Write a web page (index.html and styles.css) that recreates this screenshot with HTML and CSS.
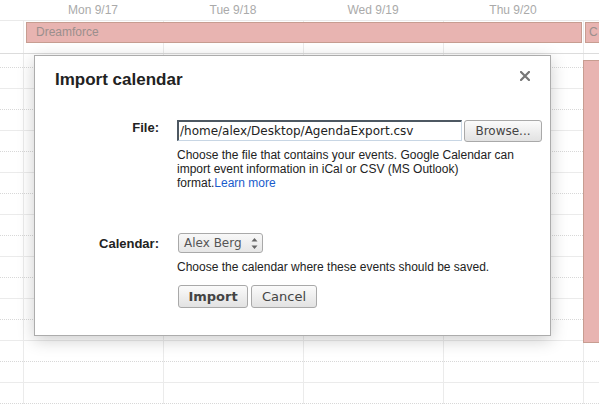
FILE: index.html
```html
<!DOCTYPE html>
<html>
<head>
<meta charset="utf-8">
<link rel="stylesheet" href="styles.css">
</head>
<body>
<div class="cal">
  <div class="head">
    <div class="gutter"></div>
    <div class="day">Mon 9/17</div>
    <div class="day">Tue 9/18</div>
    <div class="day">Wed 9/19</div>
    <div class="day">Thu 9/20</div>
    <div class="day"></div>
  </div>
  <div class="allday">
    <div class="acell c1"></div>
    <div class="acell c2"></div>
    <div class="acell c3"></div>
    <div class="acell c4"></div>
    <div class="acell c5"></div>
    <div class="acell c6"></div>
    <div class="chip chip-main">Dreamforce</div>
    <div class="chip chip-side">C</div>
  </div>
  <div class="grid">
    <div class="row first"></div>
    <div class="row solid"></div><div class="row dot"></div>
    <div class="row solid"></div><div class="row dot"></div>
    <div class="row solid"></div><div class="row dot"></div>
    <div class="row solid"></div><div class="row dot"></div>
    <div class="row solid"></div><div class="row dot"></div>
    <div class="row solid"></div><div class="row dot"></div>
    <div class="row solid"></div><div class="row dot"></div>
    <div class="row solid"></div><div class="row dot"></div>
    <div class="col c2"></div>
    <div class="col c3"></div>
    <div class="col c4"></div>
    <div class="col c5"></div>
    <div class="col c6"></div>
    <div class="event"></div>
  </div>
</div>

<div class="dialog">
  <div class="dlg-head">
    <div class="dlg-title">Import calendar</div>
    <svg class="close" width="10" height="10" viewBox="0 0 10 10"><path d="M1 1L9 9M9 1L1 9" stroke="#777" stroke-width="2.2" stroke-linecap="square"/></svg>
  </div>
  <div class="form">
    <div class="label">File:</div>
    <div class="field">
      <div class="file-row">
        <div class="input">/home/alex/Desktop/AgendaExport.csv</div>
        <div class="btn browse">Browse...</div>
      </div>
      <div class="help">Choose the file that contains your events. Google Calendar can import event information in iCal or CSV (MS Outlook) format.<a class="link">Learn more</a></div>
    </div>
    <div class="label label-cal">Calendar:</div>
    <div class="field">
      <div class="select"><span>Alex Berg</span>
        <svg class="arrows" width="7" height="13" viewBox="0 0 7 13"><path d="M3.5 1L6.5 4.5H0.5Z M3.5 12L0.5 8.5H6.5Z" fill="#666"/></svg>
      </div>
      <div class="help help-cal">Choose the calendar where these events should be saved.</div>
      <div class="actions">
        <div class="btn big import">Import</div>
        <div class="btn big cancel">Cancel</div>
      </div>
    </div>
  </div>
</div>
</body>
</html>
```

FILE: styles.css
```css
html, body {
  margin: 0;
  padding: 0;
  background: #fff;
  width: 599px;
  height: 405px;
  overflow: hidden;
  font-family: "Liberation Sans", Arial, sans-serif;
}

.cal {
  width: 599px;
}

.head {
  display: grid;
  grid-template-columns: 23px repeat(4, 140px) 1fr;
  height: 20px;
}

.day {
  font-size: 12px;
  color: #aaa;
  text-align: center;
  line-height: 20px;
}

.allday {
  display: grid;
  grid-template-columns: 23px repeat(4, 140px) 1fr;
  grid-template-rows: 32px;
  border-top: 1px solid #eaeaea;
  border-bottom: 1px solid #dcdcdc;
}

.acell { grid-row: 1; }
.acell.c1 { grid-column: 1; }
.acell.c2 { grid-column: 2; border-left: 1px solid #ebebeb; }
.acell.c3 { grid-column: 3; border-left: 1px solid #ebebeb; }
.acell.c4 { grid-column: 4; border-left: 1px solid #ebebeb; }
.acell.c5 { grid-column: 5; border-left: 1px solid #ebebeb; }
.acell.c6 { grid-column: 6; border-left: 1px solid #ebebeb; }

.chip {
  grid-row: 1;
  align-self: start;
  margin-top: 1px;
  height: 19px;
  background: #e8b4b1;
  border: 1px solid #c79d91;
  font-size: 12px;
  line-height: 19px;
  color: #9b8f8d;
  overflow: hidden;
  white-space: nowrap;
}

.chip-main {
  grid-column: 2 / 6;
  margin-left: 3px;
  margin-right: 1px;
  padding-left: 9px;
}

.chip-side {
  grid-column: 6;
  margin-left: 2px;
  padding-left: 3px;
  border-right: none;
}

.grid {
  display: grid;
  grid-template-columns: 23px repeat(4, 140px) 1fr;
  grid-template-rows: 14px repeat(16, 21px);
  height: 351px;
  overflow: hidden;
}

.row {
  grid-column: 1 / -1;
  box-sizing: border-box;
}

.row.first { grid-row: 1; border-bottom: 1px dotted #d8d8d8; }
.row:nth-child(2)  { grid-row: 2; }
.row:nth-child(3)  { grid-row: 3; }
.row:nth-child(4)  { grid-row: 4; }
.row:nth-child(5)  { grid-row: 5; }
.row:nth-child(6)  { grid-row: 6; }
.row:nth-child(7)  { grid-row: 7; }
.row:nth-child(8)  { grid-row: 8; }
.row:nth-child(9)  { grid-row: 9; }
.row:nth-child(10) { grid-row: 10; }
.row:nth-child(11) { grid-row: 11; }
.row:nth-child(12) { grid-row: 12; }
.row:nth-child(13) { grid-row: 13; }
.row:nth-child(14) { grid-row: 14; }
.row:nth-child(15) { grid-row: 15; }
.row:nth-child(16) { grid-row: 16; }
.row:nth-child(17) { grid-row: 17; }

.row.solid { border-bottom: 1px solid #ebebeb; }
.row.dot { border-bottom: 1px dotted #d8d8d8; }

.col {
  grid-row: 1 / -1;
  border-left: 1px solid #ebebeb;
}
.col.c2 { grid-column: 2; }
.col.c3 { grid-column: 3; }
.col.c4 { grid-column: 4; }
.col.c5 { grid-column: 5; }
.col.c6 { grid-column: 6; }

.event {
  grid-column: 6;
  grid-row: 1 / -1;
  align-self: start;
  margin-top: 6px;
  height: 281px;
  background: #e8b4b1;
  border: 1px solid #c79d91;
  border-right: none;
}

.dialog {
  position: absolute;
  left: 34px;
  top: 55px;
  width: 517px;
  height: 281px;
  box-sizing: border-box;
  background: #fff;
  border: 1px solid #acacac;
  box-shadow: 0 4px 16px rgba(0, 0, 0, 0.2);
  padding: 14px 20px 0 20px;
  color: #222;
}

.dlg-head {
  display: flex;
  justify-content: space-between;
  align-items: flex-start;
}

.dlg-title {
  font-size: 17px;
  font-weight: bold;
  color: #222;
}

.close {
  margin-top: 1px;
}

.form {
  display: grid;
  grid-template-columns: 104px 1fr;
  column-gap: 18px;
  row-gap: 43px;
  margin-top: 30px;
  align-items: start;
}

.label {
  text-align: right;
  font-weight: bold;
  font-size: 13px;
  color: #222;
}

.label-cal {
  padding-top: 3px;
}

.field {
  display: flex;
  flex-direction: column;
  align-items: flex-start;
}

.file-row {
  display: flex;
  gap: 2px;
  align-items: flex-start;
}

.input {
  width: 285px;
  height: 21px;
  box-sizing: border-box;
  border-style: solid;
  border-width: 2px 1px 1px 2px;
  border-color: #4d5862 #c8d6e4 #c8d6e4 #4d5862;
  font-family: "DejaVu Sans", sans-serif;
  font-size: 12px;
  line-height: 18px;
  padding-left: 1px;
  color: #222;
  white-space: nowrap;
  overflow: hidden;
}

.btn {
  box-sizing: border-box;
  border: 1px solid #a9a9a9;
  border-radius: 3px;
  background: linear-gradient(#fbfbfb, #e2e2e2);
  font-family: "DejaVu Sans", sans-serif;
  font-size: 12px;
  color: #444;
  text-align: center;
}

.browse {
  width: 78px;
  height: 22px;
  line-height: 20px;
}

.help {
  font-size: 12px;
  line-height: 14px;
  color: #222;
  margin-top: 6px;
  width: 345px;
}

.link {
  color: #1a5ccc;
}

.select {
  display: flex;
  align-items: center;
  justify-content: space-between;
  width: 85px;
  height: 20px;
  box-sizing: border-box;
  margin-left: 1px;
  padding: 0 4px 0 5px;
  border: 1px solid #a9a9a9;
  border-radius: 3px;
  background: linear-gradient(#f8f8f8, #e6e6e6);
  font-family: "DejaVu Sans", sans-serif;
  font-size: 12px;
  color: #555;
}

.help-cal {
  margin-top: 7px;
  width: auto;
}

.actions {
  display: flex;
  gap: 3px;
  margin-top: 11px;
  margin-left: 1px;
}

.big {
  height: 23px;
  line-height: 21px;
  font-size: 13px;
}

.import {
  width: 70px;
  font-weight: bold;
}

.cancel {
  width: 66px;
}
```
